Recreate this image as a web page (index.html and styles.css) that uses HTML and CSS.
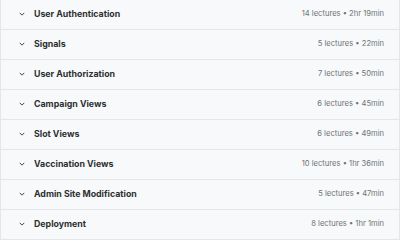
FILE: index.html
```html
<!DOCTYPE html>
<html lang="en">
<head>
    <meta charset="UTF-8">
    <meta name="viewport" content="width=device-width, initial-scale=1.0">
    <title>Course Content</title>
    <link rel="stylesheet" href="styles.css">
</head>
<body>
    <div class="curriculum">
        <div class="section">
            <div class="section-title">
                <svg class="chevron" viewBox="0 0 8 5"><path d="M1 1l3 3 3-3"/></svg>
                <span>User Authentication</span>
            </div>
            <span class="section-meta">14 lectures • 2hr 19min</span>
        </div>
        <div class="section">
            <div class="section-title">
                <svg class="chevron" viewBox="0 0 8 5"><path d="M1 1l3 3 3-3"/></svg>
                <span>Signals</span>
            </div>
            <span class="section-meta">5 lectures • 22min</span>
        </div>
        <div class="section">
            <div class="section-title">
                <svg class="chevron" viewBox="0 0 8 5"><path d="M1 1l3 3 3-3"/></svg>
                <span>User Authorization</span>
            </div>
            <span class="section-meta">7 lectures • 50min</span>
        </div>
        <div class="section">
            <div class="section-title">
                <svg class="chevron" viewBox="0 0 8 5"><path d="M1 1l3 3 3-3"/></svg>
                <span>Campaign Views</span>
            </div>
            <span class="section-meta">6 lectures • 45min</span>
        </div>
        <div class="section">
            <div class="section-title">
                <svg class="chevron" viewBox="0 0 8 5"><path d="M1 1l3 3 3-3"/></svg>
                <span>Slot Views</span>
            </div>
            <span class="section-meta">6 lectures • 49min</span>
        </div>
        <div class="section">
            <div class="section-title">
                <svg class="chevron" viewBox="0 0 8 5"><path d="M1 1l3 3 3-3"/></svg>
                <span>Vaccination Views</span>
            </div>
            <span class="section-meta">10 lectures • 1hr 36min</span>
        </div>
        <div class="section">
            <div class="section-title">
                <svg class="chevron" viewBox="0 0 8 5"><path d="M1 1l3 3 3-3"/></svg>
                <span>Admin Site Modification</span>
            </div>
            <span class="section-meta">5 lectures • 47min</span>
        </div>
        <div class="section">
            <div class="section-title">
                <svg class="chevron" viewBox="0 0 8 5"><path d="M1 1l3 3 3-3"/></svg>
                <span>Deployment</span>
            </div>
            <span class="section-meta">8 lectures • 1hr 1min</span>
        </div>
    </div>
</body>
</html>
```
FILE: styles.css
```css
body {
    margin: 0;
    font-family: Inter, 'Liberation Sans', sans-serif;
    background-color: #ffffff;
}
.curriculum {
    width: 400px;
    box-sizing: border-box;
    border-left: 1px solid #e4e7ea;
    border-right: 1px solid #e4e7ea;
}
.section {
    display: flex;
    align-items: center;
    justify-content: space-between;
    box-sizing: border-box;
    height: 30px;
    padding: 0 15px 2px 18px;
    background-color: #f7f9fa;
    border-bottom: 1px solid #e4e7ea;
}
.section-title {
    display: flex;
    align-items: center;
    gap: 9px;
    font-size: 8.8px;
    font-weight: 700;
    color: #2d2f31;
}
.chevron {
    width: 6px;
    height: 4px;
    fill: none;
    stroke: #3e4143;
    stroke-width: 1.3;
}
.section-meta {
    font-size: 7.6px;
    color: #6f7477;
}
```
